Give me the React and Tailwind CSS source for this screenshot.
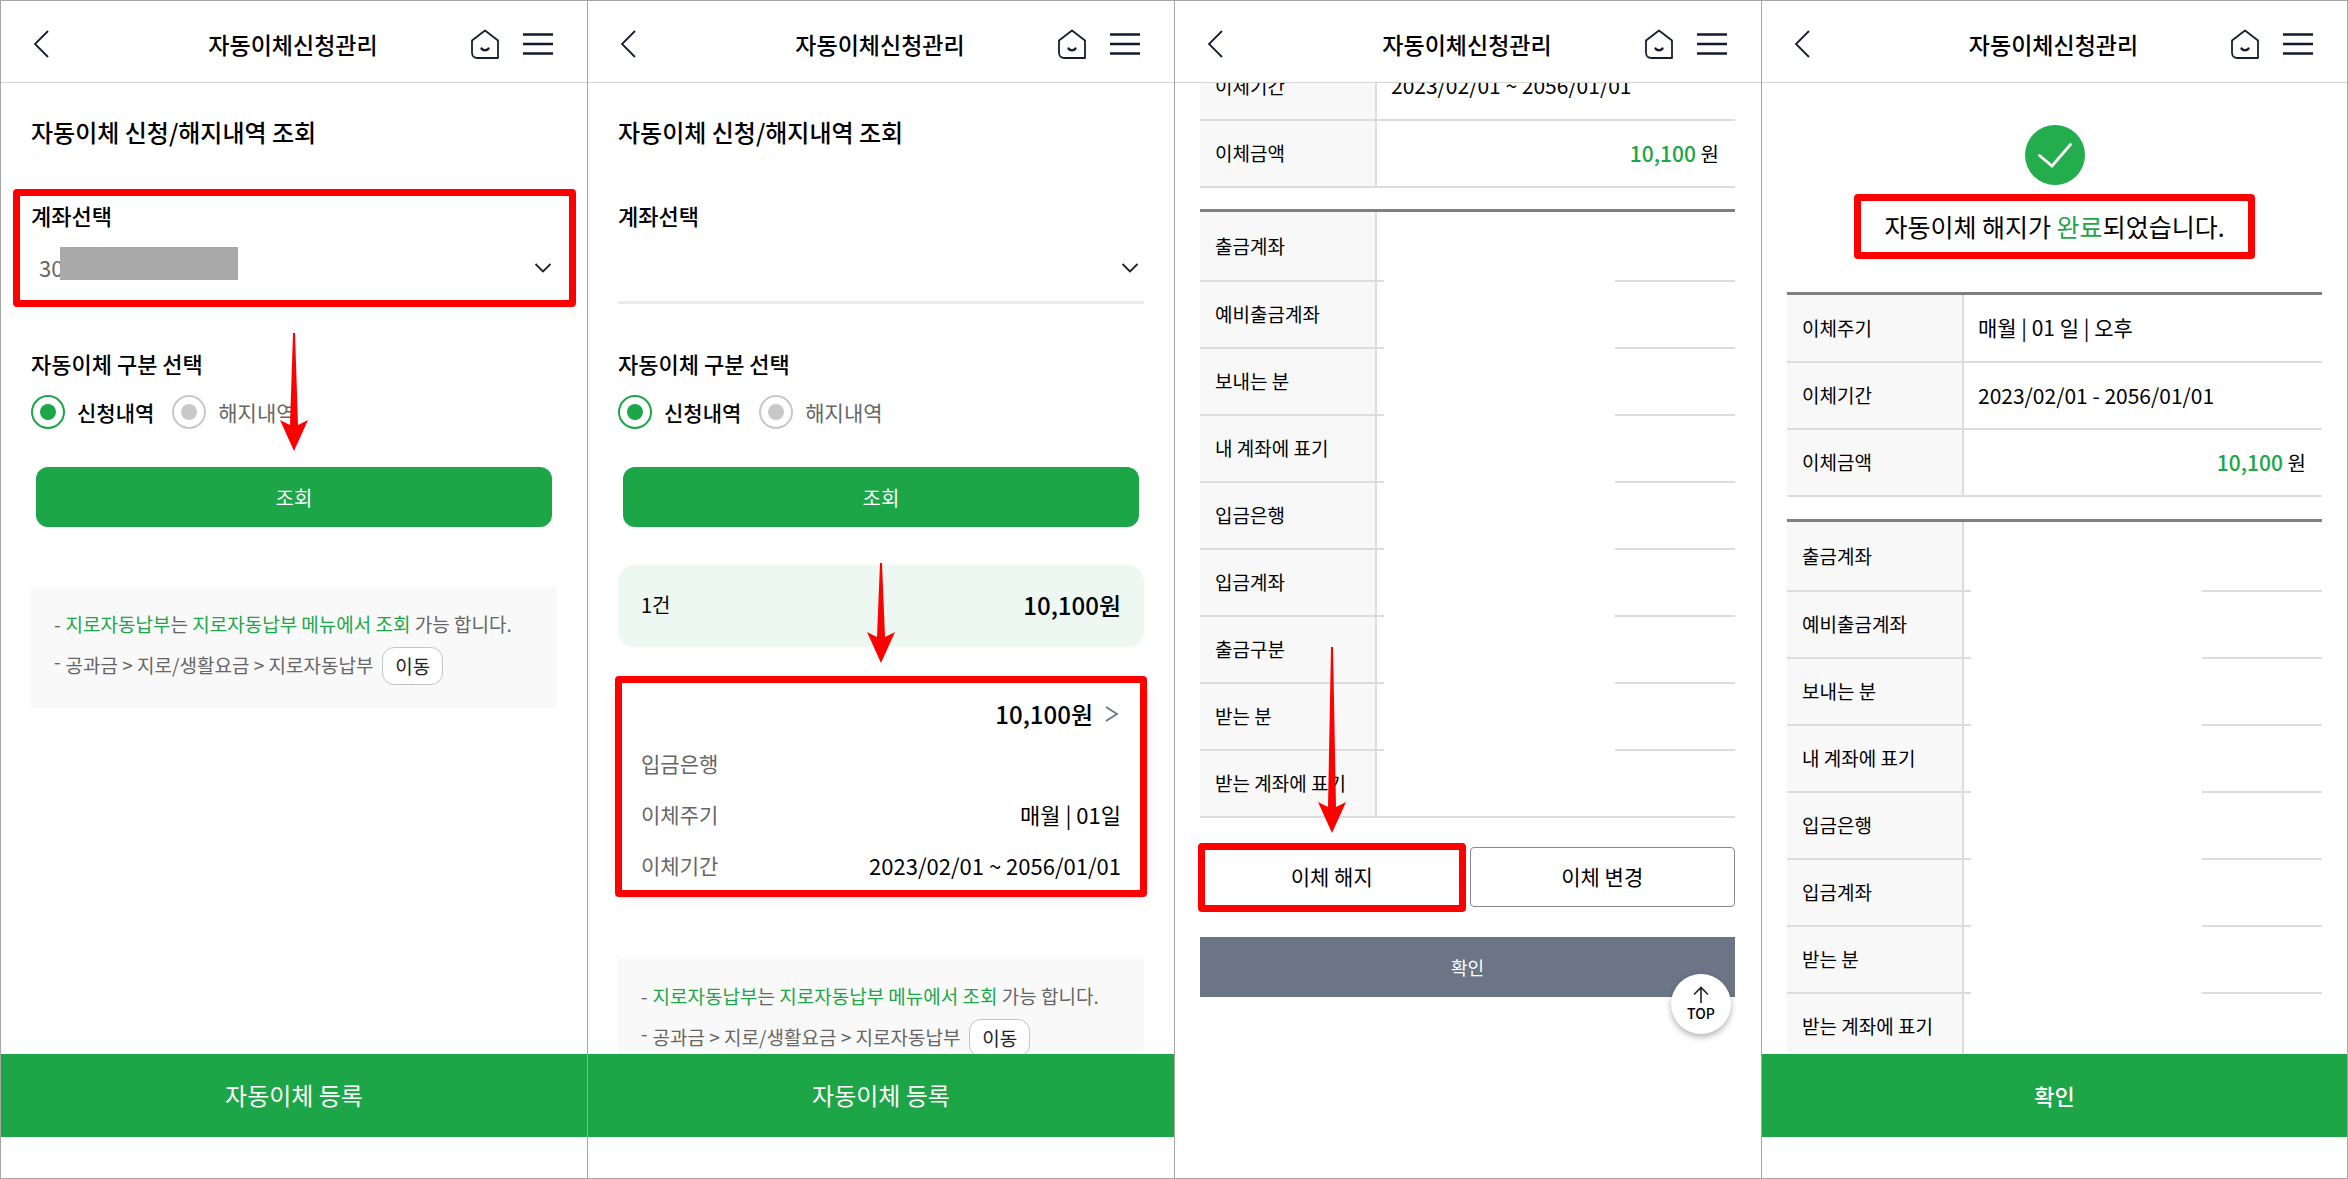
import { useState } from "react";

const accountRows = [
  "출금계좌",
  "예비출금계좌",
  "보내는 분",
  "내 계좌에 표기",
  "입금은행",
  "입금계좌",
  "출금구분",
  "받는 분",
  "받는 계좌에 표기",
];

const Header = () => (
  <header className="flex h-[82px] shrink-0 items-center border-b border-[#d6d6d6] pt-2 pr-[34px] pb-1 pl-8">
    <button type="button" aria-label="뒤로" className="flex w-20">
      <svg width="16" height="28" viewBox="0 0 16 28" fill="none" stroke="#16202f" strokeWidth="1.8">
        <path d="M15 1 2 14l13 13" />
      </svg>
    </button>
    <h1 className="flex-1 text-center text-[23px] leading-8 font-medium">자동이체신청관리</h1>
    <div className="flex w-20 items-center justify-end gap-6">
      <button type="button" aria-label="홈">
        <svg width="28" height="30" viewBox="0 0 28 30" fill="none" stroke="#16202f" strokeWidth="1.8">
          <path d="M14 1.5 27 11.500v17.5H6.500C3 29 1 27 1 23.500v-12z" strokeLinejoin="round" />
          <path d="M10.500 19.500c1.500 2.400 5.500 2.400 7 0" strokeWidth="2.400" strokeLinecap="round" />
        </svg>
      </button>
      <button type="button" aria-label="전체메뉴">
        <svg width="30" height="24" viewBox="0 0 30 24" stroke="#141b30" strokeWidth="2.400">
          <path d="M0 2.500h30M0 12h30M0 21.500h30" />
        </svg>
      </button>
    </div>
  </header>
);

const Screen = ({ children, action }) => (
  <section className="flex h-screen min-w-0 flex-col overflow-hidden border-y border-l border-[#a6a6a6] last:border-r">
    <Header />
    <main className="min-h-0 flex-1 overflow-hidden">{children}</main>
    {action}
  </section>
);

const BottomButton = ({ className, children }) => (
  <button
    type="button"
    className={`mb-[41px] h-[83px] shrink-0 bg-[#1ca647] pb-0.5 leading-9 text-white ${className}`}
  >
    {children}
  </button>
);

// red frame around the part to press
const Frame = ({ className }) => (
  <span className={`pointer-events-none absolute rounded-[4px] border-[7px] border-[#ff0000] ${className}`} />
);

const Arrow = ({ length, className }) => (
  <svg
    width="28"
    height={length}
    className={`pointer-events-none absolute left-1/2 z-10 -translate-x-1/2 ${className}`}
    fill="#ff0000"
  >
    <path
      d={`M13 0h2L18 ${length - 26}L28 ${length - 31}L14 ${length}L0 ${length - 31}L10 ${length - 26}Z`}
    />
  </svg>
);

const SearchForm = ({ id, account, guide }) => {
  const [kind, setKind] = useState("apply");
  const kinds = [
    { value: "apply", label: "신청내역" },
    { value: "cancel", label: "해지내역" },
  ];

  return (
    <form onSubmit={(e) => e.preventDefault()}>
      <h2 className="pt-[31px] text-2xl leading-9 font-medium">자동이체 신청/해지내역 조회</h2>
      <div className="relative mt-[49px]">
        <label htmlFor={`${id}-account`} className="block text-[22px] leading-8 font-medium">
          계좌선택
        </label>
        <div className="relative mt-[7px] border-b-[3px] border-[#ebebeb]">
          <select
            id={`${id}-account`}
            className="h-[63px] w-full appearance-none bg-transparent px-2 pb-1 text-[22px] text-[#666]"
          >
            <option>{account}</option>
          </select>
          {account && <span className="absolute top-[9px] left-[29px] h-[33px] w-[178px] bg-[#a9a9a9]" />}
          <svg
            width="18"
            height="10"
            viewBox="0 0 18 10"
            fill="none"
            stroke="#222"
            strokeWidth="1.800"
            className="pointer-events-none absolute top-[25px] right-[5px]"
          >
            <path d="m1.500 1 7.500 7.500L16.500 1" />
          </svg>
        </div>
        {guide && <Frame className="-top-[10px] -right-[19px] -bottom-[3px] -left-[18px]" />}
      </div>
      <fieldset className="mt-[43px]">
        <legend className="text-[22px] leading-8 font-medium">자동이체 구분 선택</legend>
        <div className="mt-4 flex gap-[18px]">
          {kinds.map((k) => (
            <label
              key={k.value}
              className="flex items-center gap-3 text-[21px] leading-[34px] text-[#666] has-checked:font-medium has-checked:text-black"
            >
              <input
                type="radio"
                name={`${id}-kind`}
                checked={kind === k.value}
                onChange={() => setKind(k.value)}
                className="grid size-[34px] appearance-none place-items-center rounded-full border-2 border-[#c8c8c8] before:size-4 before:rounded-full before:bg-[#c8c8c8] checked:border-[#1ca647] checked:before:bg-[#1ca647]"
              />
              {k.label}
            </label>
          ))}
        </div>
      </fieldset>
      <div className="relative mx-[5px] mt-[38px]">
        <button type="submit" className="h-[60px] w-full rounded-xl bg-[#1ca647] pt-0.5 text-[20px] text-white">
          조회
        </button>
        {guide && <Arrow length={118} className="bottom-[76px]" />}
      </div>
    </form>
  );
};

const Notice = ({ className }) => (
  <ul className={`bg-[#f9f9f9] px-[23px] pt-[17px] pb-[22px] text-[19px] whitespace-nowrap text-[#666] ${className}`}>
    <li className="flex h-[41px] items-center gap-[5px]">
      <span>-</span>
      <p>
        <span className="text-[#1ca647]">지로자동납부</span>는{" "}
        <span className="text-[#1ca647]">지로자동납부 메뉴에서 조회</span> 가능 합니다.
      </p>
    </li>
    <li className="flex h-[41px] items-center gap-[5px]">
      <span className="pb-2">-</span>
      <p>공과금 &gt; 지로/생활요금 &gt; 지로자동납부</p>
      <button type="button" className="ml-1 h-[38px] rounded-xl border border-[#c4c4c4] bg-white px-3 leading-8 text-[#222]">
        이동
      </button>
    </li>
  </ul>
);

const DetailTable = ({ rows, masked, className }) => (
  <div className={`relative ${className}`}>
    <table className="w-full border-collapse">
      <tbody className={masked ? "[&>tr:first-child]:h-[69px]" : ""}>
        {rows.map((row) => (
          <tr key={row.label} className="h-[67px] border-b-2 border-[#dcdcdc]">
            <th
              scope="row"
              className="w-[176px] border-r-2 border-[#dcdcdc] bg-[#f8f8f8] pl-[15px] text-left text-[19px] font-normal"
            >
              {row.label}
            </th>
            <td className="pr-4 pl-3.5 text-[21px]">{row.value}</td>
          </tr>
        ))}
      </tbody>
    </table>
    {masked && <span className="absolute top-0 bottom-[3px] left-[184px] w-[231px] bg-white" />}
  </div>
);

const Amount = () => (
  <p className="text-right">
    <span className="font-medium text-[#1ca647]">10,100</span> <span className="text-[20px]">원</span>
  </p>
);

const RegisterButton = () => <BottomButton className="text-2xl">자동이체 등록</BottomButton>;

const SearchScreen = () => (
  <Screen action={<RegisterButton />}>
    <div className="px-[30px]">
      <SearchForm id="search" account="30" guide />
      <Notice className="mt-[60px]" />
    </div>
  </Screen>
);

const ResultScreen = () => (
  <Screen action={<RegisterButton />}>
    <div className="px-[30px]">
      <SearchForm id="result" account="" />
      <div className="mt-[38px] flex h-[82px] items-center justify-between rounded-2xl bg-[#eef8f3] px-[23px] pb-0.5">
        <p className="text-[20px]">1건</p>
        <p className="text-2xl font-medium">10,100원</p>
      </div>
      <div className="relative mt-8 rounded-xl bg-white px-[23px] pt-[11px] pb-0.5 shadow-[0_4px_16px_rgba(0,0,0,0.12)]">
        <Arrow length={100} className="bottom-[calc(100%+16px)]" />
        <a href="#detail" className="flex h-12 items-center justify-end gap-3 text-2xl font-medium">
          10,100원
          <svg width="16" height="18" viewBox="0 0 16 18" fill="none" stroke="#6b7586" strokeWidth="1.800">
            <path d="m1 2 11 7-11 7" />
          </svg>
        </a>
        <dl className="text-[22px]">
          <div className="flex h-[51px] items-center justify-between">
            <dt className="text-[21px] text-[#666]">입금은행</dt>
          </div>
          <div className="flex h-[51px] items-center justify-between">
            <dt className="text-[21px] text-[#666]">이체주기</dt>
            <dd>매월 | 01일</dd>
          </div>
          <div className="flex h-[51px] items-center justify-between">
            <dt className="text-[21px] text-[#666]">이체기간</dt>
            <dd>2023/02/01 ~ 2056/01/01</dd>
          </div>
        </dl>
        <Frame className="-inset-x-[3px] -top-[3px] -bottom-1" />
      </div>
      <Notice className="mt-[66px]" />
    </div>
  </Screen>
);

const DetailScreen = () => (
  <Screen>
    <div className="-mt-[30px] pr-[26px] pl-[25px]">
      <DetailTable
        rows={[
          { label: "이체기간", value: "2023/02/01 ~ 2056/01/01" },
          { label: "이체금액", value: <Amount /> },
        ]}
      />
      <DetailTable
        masked
        className="mt-[21px] border-t-[3px] border-[#808080]"
        rows={accountRows.map((label) => ({ label }))}
      />
      <div className="mt-[29px] flex gap-1.5 text-[21px]">
        <div className="relative flex-1">
          <button type="button" className="h-[60px] w-full rounded border border-[#888]">
            이체 해지
          </button>
          <Arrow length={186} className="bottom-[74px]" />
          <Frame className="-top-1 -right-0.5 -bottom-[5px] -left-0.5" />
        </div>
        <button type="button" className="h-[60px] flex-1 rounded border border-[#888]">
          이체 변경
        </button>
      </div>
      <div className="relative mt-[30px]">
        <button type="button" className="h-[60px] w-full bg-[#6b7586] text-lg text-white">
          확인
        </button>
        <a
          href="#top"
          className="absolute top-[37px] right-1 flex size-[60px] flex-col items-center rounded-full bg-white pt-3 shadow-[0_3px_6px_rgba(0,0,0,0.3)]"
        >
          <svg width="16" height="17" viewBox="0 0 16 17" fill="none" stroke="#222" strokeWidth="1.600">
            <path d="M8 17V1.500M1 8.500l7-7 7 7" />
          </svg>
          <span className="text-sm leading-5 font-medium">TOP</span>
        </a>
      </div>
    </div>
  </Screen>
);

const CompleteScreen = () => (
  <Screen action={<BottomButton className="text-[22px] font-medium">확인</BottomButton>}>
    <div className="px-[25px] pt-[42px]">
      <svg width="60" height="60" viewBox="0 0 60 60" className="mx-auto" fill="none">
        <circle cx="30" cy="30" r="30" fill="#24ad4d" />
        <path d="m14.500 30.500 12.500 10.500L45.500 19.500" stroke="#fff" strokeWidth="2.800" strokeLinecap="round" />
      </svg>
      <p className="relative mx-auto mt-[9px] flex h-[65px] w-[401px] items-center justify-center text-[25px]">
        <span>
          자동이체 해지가 <span className="text-[#1ca647]">완료</span>되었습니다.
        </span>
        <Frame className="inset-0" />
      </p>
      <DetailTable
        className="mt-[33px] border-t-[3px] border-[#808080]"
        rows={[
          { label: "이체주기", value: "매월 | 01 일 | 오후" },
          { label: "이체기간", value: "2023/02/01 - 2056/01/01" },
          { label: "이체금액", value: <Amount /> },
        ]}
      />
      <DetailTable
        masked
        className="mt-[22px] border-t-[3px] border-[#808080]"
        rows={accountRows.filter((label) => label !== "출금구분").map((label) => ({ label }))}
      />
    </div>
  </Screen>
);

const App = () => {
  return (
    <div className="grid grid-cols-4 bg-white font-['Noto_Sans_CJK_KR','Noto_Sans',sans-serif] text-black">
      <SearchScreen />
      <ResultScreen />
      <DetailScreen />
      <CompleteScreen />
    </div>
  );
};

export default App;
